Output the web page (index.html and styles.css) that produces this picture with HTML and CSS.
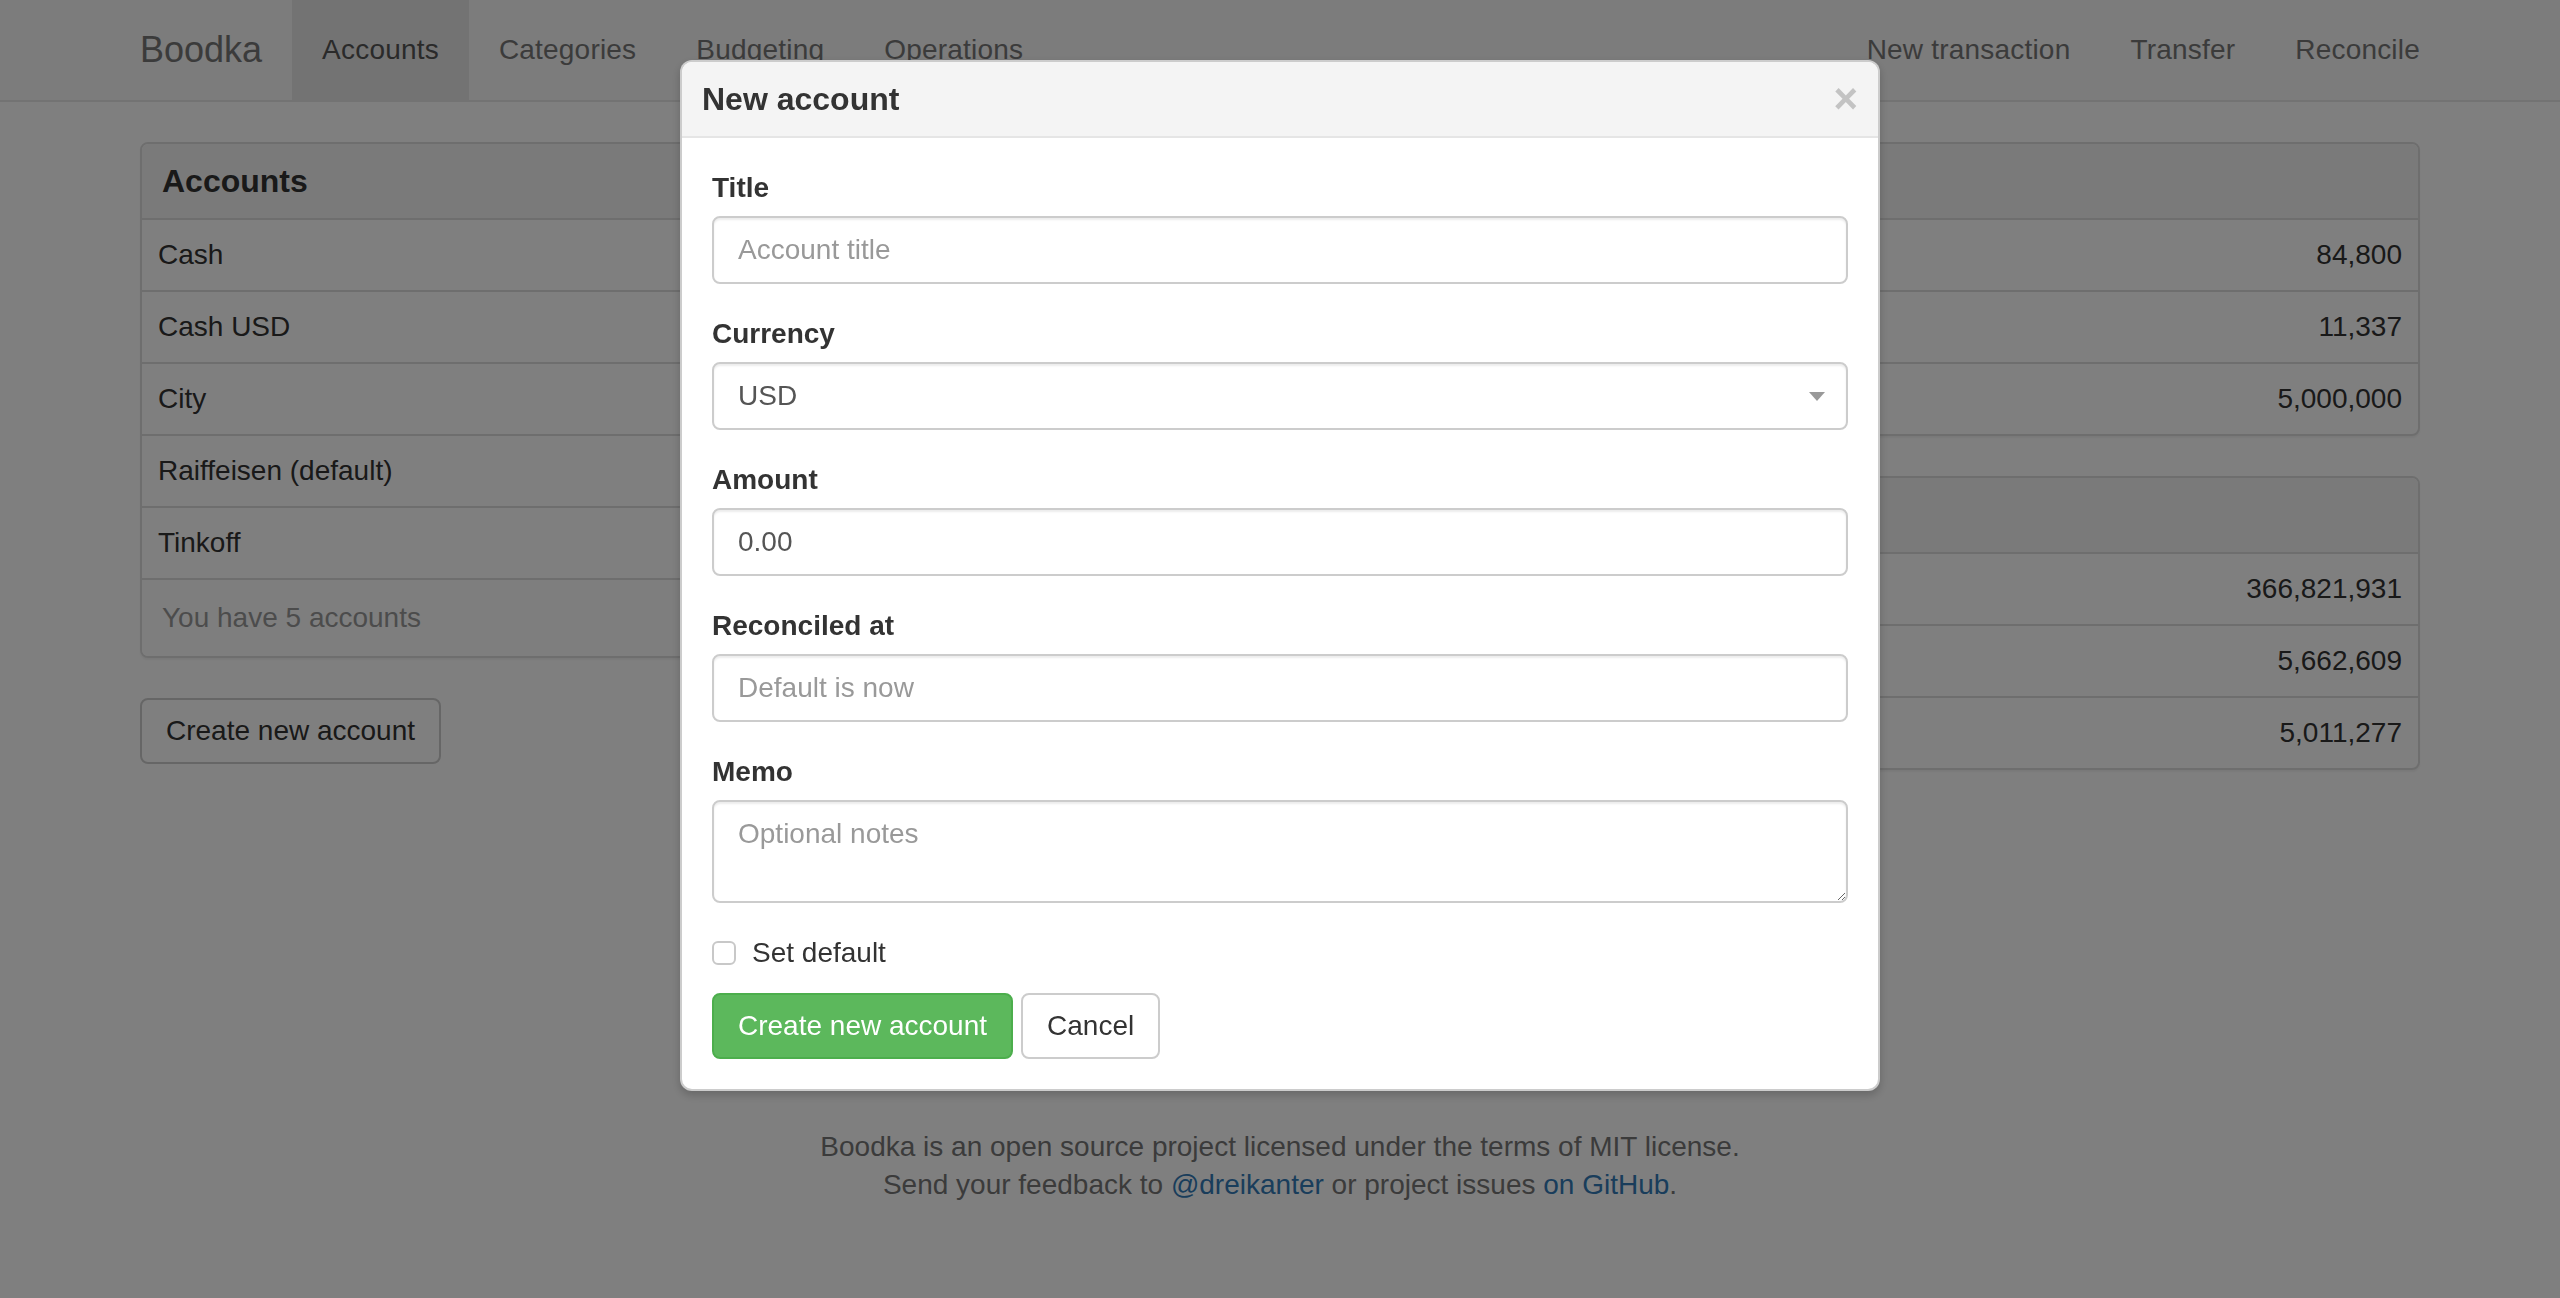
FILE: index.html
```html
<!DOCTYPE html>
<html lang="en">
<head>
<meta charset="utf-8">
<title>Boodka — Accounts</title>
<link rel="stylesheet" href="styles.css">
</head>
<body>
<nav class="navbar">
  <div class="container navbar-inner">
    <a class="brand" href="#">Boodka</a>
    <ul class="nav">
      <li class="active"><a href="#">Accounts</a></li>
      <li><a href="#">Categories</a></li>
      <li><a href="#">Budgeting</a></li>
      <li><a href="#">Operations</a></li>
    </ul>
    <ul class="nav nav-right">
      <li><a href="#">New transaction</a></li>
      <li><a href="#">Transfer</a></li>
      <li><a href="#">Reconcile</a></li>
    </ul>
  </div>
</nav>

<main class="container">
  <div class="row">
    <div class="col">
      <section class="panel">
        <div class="panel-heading"><h3 class="panel-title">Accounts</h3></div>
        <table class="table">
          <tr><td>Cash</td></tr>
          <tr><td>Cash USD</td></tr>
          <tr><td>City</td></tr>
          <tr><td>Raiffeisen (default)</td></tr>
          <tr><td>Tinkoff</td></tr>
        </table>
        <div class="panel-footer">You have 5 accounts</div>
      </section>
      <button class="btn btn-default" type="button">Create new account</button>
    </div>
    <div class="col">
      <section class="panel">
        <div class="panel-heading"><h3 class="panel-title">Balance</h3></div>
        <table class="table">
          <tr><td>RUB</td><td class="num">84,800</td></tr>
          <tr><td>USD</td><td class="num">11,337</td></tr>
          <tr><td>EUR</td><td class="num">5,000,000</td></tr>
        </table>
      </section>
      <section class="panel">
        <div class="panel-heading"><h3 class="panel-title">Totals</h3></div>
        <table class="table">
          <tr><td>Income</td><td class="num">366,821,931</td></tr>
          <tr><td>Expense</td><td class="num">5,662,609</td></tr>
          <tr><td>Net</td><td class="num">5,011,277</td></tr>
        </table>
      </section>
    </div>
  </div>
</main>

<footer class="footer">
  <p>Boodka is an open source project licensed under the terms of MIT license.<br>Send your feedback to <a href="#">@dreikanter</a> or project issues <a href="#">on GitHub</a>.</p>
</footer>

<div class="backdrop"></div>
<div class="modal">
  <div class="modal-dialog">
    <div class="modal-content">
      <div class="modal-header">
        <h4 class="modal-title">New account</h4>
        <button class="close" type="button" aria-label="Close">×</button>
      </div>
      <form class="modal-body">
        <div class="form-group">
          <label class="control-label">Title</label>
          <input class="form-control" type="text" placeholder="Account title">
        </div>
        <div class="form-group">
          <label class="control-label">Currency</label>
          <div class="select-wrap">
            <select class="form-control">
              <option>USD</option>
              <option>RUB</option>
              <option>EUR</option>
            </select>
          </div>
        </div>
        <div class="form-group">
          <label class="control-label">Amount</label>
          <input class="form-control" type="text" value="0.00">
        </div>
        <div class="form-group">
          <label class="control-label">Reconciled at</label>
          <input class="form-control" type="text" placeholder="Default is now">
        </div>
        <div class="form-group">
          <label class="control-label">Memo</label>
          <textarea class="form-control memo" placeholder="Optional notes"></textarea>
        </div>
        <div class="checkbox">
          <label class="check-label"><input type="checkbox" class="check"><span>Set default</span></label>
        </div>
        <div class="actions">
          <button class="btn btn-success" type="button">Create new account</button>
          <button class="btn btn-default" type="button">Cancel</button>
        </div>
      </form>
    </div>
  </div>
</div>
</body>
</html>
```
FILE: styles.css
```css
* { box-sizing: border-box; }

html, body {
  margin: 0;
  padding: 0;
}

body {
  font-family: "Liberation Sans", Arial, sans-serif;
  font-size: 28px;
  line-height: 40px;
  color: #333;
  background: #fff;
}

a { color: #337ab7; text-decoration: none; }

.container {
  width: 2340px;
  margin: 0 auto;
  padding: 0 30px;
}

/* Navbar */
.navbar {
  background: #f8f8f8;
  border-bottom: 2px solid #e7e7e7;
  margin-bottom: 40px;
}

.navbar-inner {
  display: flex;
  height: 100px;
}

.brand {
  margin-left: -30px;
  padding: 30px;
  font-size: 36px;
  line-height: 40px;
  color: #777;
}

.nav {
  display: flex;
  list-style: none;
  margin: 0;
  padding: 0;
}

.nav a {
  display: block;
  padding: 30px;
  color: #777;
  font-size: 28px;
  line-height: 40px;
  letter-spacing: 0.2px;
}

.nav .active a {
  background: #e7e7e7;
  color: #555;
}

.nav-right {
  margin-left: auto;
  margin-right: -30px;
}

/* Layout */
.row {
  display: grid;
  grid-template-columns: 1fr 1fr;
  column-gap: 60px;
  align-items: start;
}

/* Panels */
.panel {
  background: #fff;
  border: 2px solid #ddd;
  border-radius: 8px;
  margin-bottom: 40px;
  box-shadow: 0 2px 2px rgba(0, 0, 0, 0.05);
  overflow: hidden;
}

.panel-heading {
  padding: 20px;
  background: #f5f5f5;
  border-bottom: 2px solid #ddd;
}

.panel-title {
  margin: 0;
  font-size: 32px;
  line-height: 34px;
  font-weight: bold;
  color: #333;
}

.table {
  width: 100%;
  border-collapse: separate;
  border-spacing: 0;
}

.table td {
  padding: 16px;
  line-height: 38px;
  border-top: 2px solid #ddd;
}

.table tr:first-child td { border-top: 0; }

.num { text-align: right; }

.panel-footer {
  padding: 18px 20px;
  background: #fdfdfd;
  border-top: 2px solid #ddd;
  color: #999;
}

/* Buttons */
.btn {
  display: inline-block;
  padding: 12px 24px;
  font-family: inherit;
  font-size: 28px;
  line-height: 38px;
  border: 2px solid transparent;
  border-radius: 8px;
  cursor: pointer;
}

.btn-default {
  color: #333;
  background: #fff;
  border-color: #ccc;
}

.btn-success {
  color: #fff;
  background: #5cb85c;
  border-color: #4cae4c;
}

/* Footer */
.footer {
  padding-top: 318px;
  text-align: center;
  color: #777;
}

.footer p {
  margin: 0;
  line-height: 38px;
}

/* Modal */
.backdrop {
  position: fixed;
  inset: 0;
  background: rgba(0, 0, 0, 0.5);
}

.modal {
  position: fixed;
  inset: 0;
  overflow: auto;
}

.modal-dialog {
  width: 1200px;
  margin: 60px auto;
}

.modal-content {
  background: #fff;
  border: 2px solid rgba(0, 0, 0, 0.2);
  border-radius: 12px;
  box-shadow: 0 4px 10px rgba(0, 0, 0, 0.2);
  overflow: hidden;
}

.modal-header {
  display: flex;
  align-items: center;
  justify-content: space-between;
  padding: 20px;
  background: #f4f4f4;
  border-bottom: 2px solid #e5e5e5;
}

.modal-title {
  margin: 0;
  font-size: 32px;
  line-height: 34px;
  font-weight: bold;
  color: #333;
}

.close {
  padding: 0;
  border: 0;
  background: none;
  font-family: inherit;
  font-size: 42px;
  line-height: 34px;
  font-weight: bold;
  color: #c3c3c3;
}

.modal-body {
  display: block;
  padding: 30px;
}

.form-group { margin-bottom: 30px; }

.control-label {
  display: block;
  margin-bottom: 8px;
  font-weight: bold;
}

.form-control {
  display: block;
  width: 100%;
  height: 68px;
  padding: 12px 24px;
  font-family: inherit;
  font-size: 28px;
  line-height: 40px;
  color: #555;
  background: #fff;
  border: 2px solid #ccc;
  border-radius: 8px;
  box-shadow: inset 0 2px 2px rgba(0, 0, 0, 0.075);
}

.form-control::placeholder { color: #999; }

.memo {
  height: 103px;
  resize: both;
}

.select-wrap { position: relative; }

.select-wrap select {
  appearance: none;
  -webkit-appearance: none;
}

.select-wrap::after {
  content: "";
  position: absolute;
  right: 23px;
  top: 30px;
  border-top: 9px solid #999;
  border-left: 8px solid transparent;
  border-right: 8px solid transparent;
}

.checkbox { margin: 0 0 20px; }

.check-label {
  display: flex;
  align-items: center;
  margin: 0;
}

.check {
  appearance: none;
  -webkit-appearance: none;
  width: 24px;
  height: 24px;
  margin: 0 16px 0 0;
  border: 2px solid #c8c8c8;
  border-radius: 6px;
  background: #fff;
}

.actions {
  display: flex;
  gap: 8px;
}
```
